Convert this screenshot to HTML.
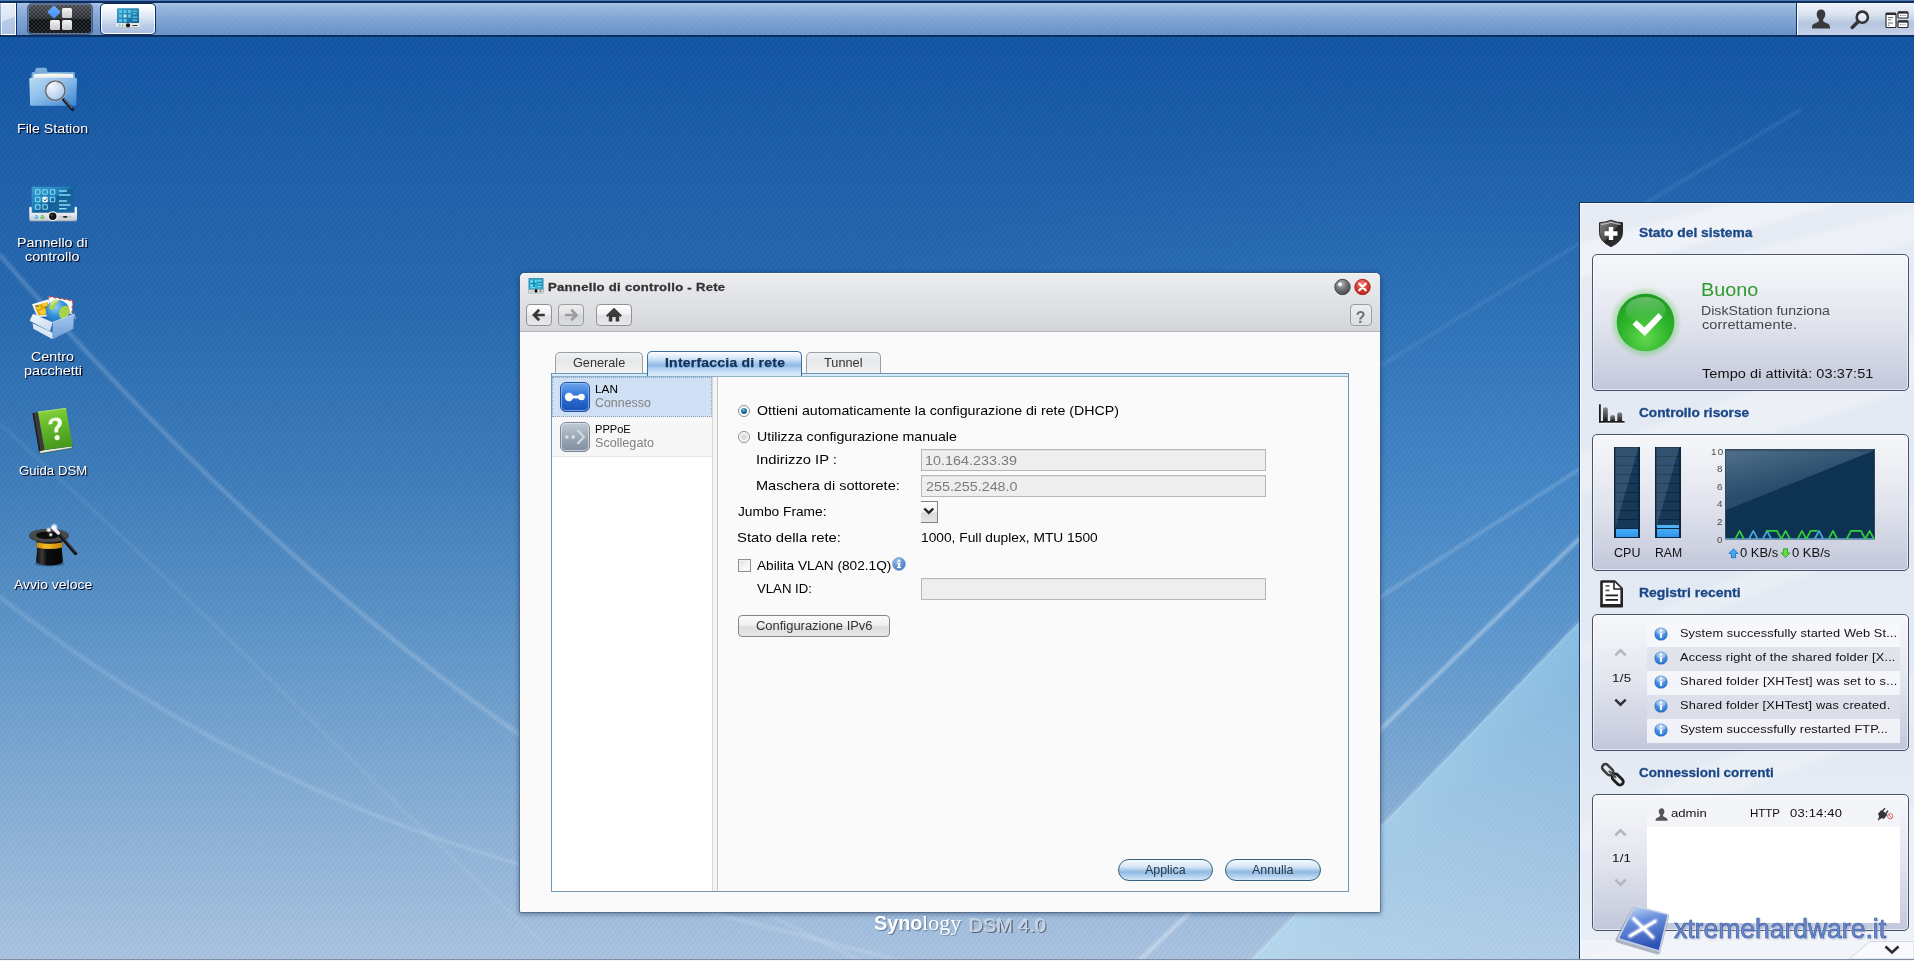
<!DOCTYPE html>
<html>
<head>
<meta charset="utf-8">
<title>Synology DSM 4.0</title>
<style>
*{box-sizing:border-box;margin:0;padding:0}
html,body{width:1914px;height:961px;overflow:hidden}
body{font-family:"Liberation Sans",sans-serif;font-size:13px;color:#000;position:relative;background:#1457a6}
.abs{position:absolute}
.t{position:absolute;white-space:nowrap;line-height:1;transform-origin:0 50%}
/* ---------- background ---------- */
#bg{position:absolute;left:0;top:0;width:1914px;height:961px;
 background:linear-gradient(180deg,#1255a5 0px,#1457a6 55px,#286bb1 315px,#3f7ebc 485px,#6399cb 655px,#86aed6 800px,#a5c1e0 935px,#aac4e2 961px)}
#bgtint{position:absolute;left:0;top:0;width:1914px;height:961px;background:radial-gradient(ellipse 800px 350px at 1520px 470px,rgba(90,175,255,.19),rgba(90,175,255,.09) 55%,rgba(90,175,255,0) 100%)}
#stripes{position:absolute;left:0;top:0;width:1914px;height:961px;
 background:repeating-linear-gradient(128deg,rgba(255,255,255,.026) 0px,rgba(255,255,255,.008) 1.2px,rgba(0,0,0,.03) 2px,rgba(0,0,0,.03) 3px,rgba(255,255,255,.026) 4px)}
#bgsvg{position:absolute;left:0;top:0}
/* ---------- taskbar ---------- */
#tb{position:absolute;left:0;top:0;width:1914px;height:37px;background:#0d2f60}
#tb .line0{position:absolute;left:0;top:0;width:1914px;height:1px;background:#4d78b3}
#tb .bar{position:absolute;left:0;top:3px;width:1914px;height:32px;
 background:linear-gradient(180deg,#a9c4e6 0,#97b6dd 4px,#7fa4d3 16px,#6a94ca 28px,#6790c6 32px)}
#tb .barstripes{position:absolute;left:0;top:3px;width:1914px;height:32px;
 background:repeating-linear-gradient(135deg,rgba(255,255,255,.035) 0,rgba(255,255,255,.035) 2px,rgba(0,0,0,.0) 2px,rgba(0,0,0,.0) 4px)}

#tb .lbox{position:absolute;left:1px;top:3px;width:15px;height:32px;border:1px solid #fff;border-left-color:#e8eef7;
 background:linear-gradient(160deg,#e9eff8 0,#dbe5f3 48%,#b9cde8 52%,#a9c1e2 100%);box-shadow:1px 0 0 #0d2f60}
#tb .mm{position:absolute;left:28px;top:4px;width:64px;height:30px;border-radius:4px;border:1px solid #5f7896;
 background-color:#1b1f25;
 background-image:linear-gradient(180deg,rgba(255,255,255,.22) 0,rgba(255,255,255,.10) 45%,rgba(0,0,0,.25) 55%,rgba(0,0,0,.1) 100%),
 repeating-conic-gradient(#30353c 0 25%,#14171b 0 50%);background-size:100% 100%,4px 4px;box-shadow:0 0 0 1px rgba(20,40,80,.55)}
#tb .mm i{position:absolute;width:10px;height:10px;border-radius:1.5px;background:linear-gradient(180deg,#f4f4f4,#c9c9c9)}
#tb .task{position:absolute;left:101px;top:4px;width:54px;height:30px;border-radius:4px;border:1px solid #fff;
 background:linear-gradient(180deg,#fdfeff 0,#e4ebf6 35%,#b9cce8 75%,#a9c0e2 100%);box-shadow:0 0 0 1px #0f2c58}
#tb .tray{position:absolute;left:1797px;top:3px;width:117px;height:32px;border-left:1px solid #fff;border-top:1px solid #f3f6fb;
 background:linear-gradient(180deg,#eef2f9 0,#dde5f1 30%,#b6c6e0 62%,#c3d1e8 100%);box-shadow:-1px 0 0 #10305f}

#bgsvg{position:absolute;left:0;top:0}

/* ---------- desktop icons ---------- */
.dl{color:#fff;text-shadow:1px 1px 0 rgba(0,0,20,.8),1px 1px 1px rgba(0,0,20,.5)}

/* ---------- window ---------- */
#win{position:absolute;left:520px;top:273px;width:860px;height:639px;background:#fafafa;border-radius:5px 5px 1px 1px;
 box-shadow:0 0 0 1px rgba(70,90,120,.55),0 1px 5px 1px rgba(10,30,70,.45)}
#win .hd{position:absolute;left:0;top:0;width:860px;height:59px;border-radius:5px 5px 0 0;
 background:linear-gradient(180deg,#eceef0 0,#e4e6e9 30%,#dadcdf 75%,#d4d6d9 100%);border-bottom:1px solid #b3b5b8;box-shadow:inset 0 1px 0 #f6f7f8}
.nbtn{position:absolute;top:31px;height:22px;border:1px solid #8f9296;border-radius:4px;
 background:linear-gradient(180deg,#fefefe 0,#f1f1f2 45%,#dfe0e1 55%,#e9e9ea 100%)}
.nbtn.dis{background:linear-gradient(180deg,#ededee 0,#e2e3e4 45%,#d4d5d7 55%,#dcdddf 100%);border-color:#9a9da1}
.tab{position:absolute;top:79px;height:22px;border:1px solid #9aa0a6;border-bottom:none;border-radius:5px 5px 0 0;
 background:linear-gradient(180deg,#f0f1f2 0,#e6e7e9 40%,#f3f4f5 100%)}
.tab.act{top:78px;height:25px;border-color:#3f6f9f;background:linear-gradient(180deg,#fdfeff 0,#d8e8f8 25%,#8fbce8 55%,#cfe4f7 85%,#d6eaf9 100%);z-index:2}
#pnl{position:absolute;left:31px;top:100px;width:798px;height:519px;border:1px solid #6e98b3;background:#fafafa}
#pnl .strip{position:absolute;left:0;top:0;width:796px;height:3px;background:#d3eafb;border-bottom:1px solid #8fb1c9}
#pnl .list{position:absolute;left:0;top:3px;width:160px;height:514px;background:#fff}
#pnl .split{position:absolute;left:160px;top:3px;width:6px;height:514px;background:#f4f4f4;border-left:1px solid #d8d8d8;border-right:1px solid #c9c9c9}
.row1{position:absolute;left:0;top:0;width:160px;height:40px;background:#cfe0f4;border:1px dotted #8da2bb}
.row2{position:absolute;left:0;top:40px;width:160px;height:40px;background:#f7f7f7;border-bottom:1px solid #e6e6e6}
.inp{position:absolute;left:401px;width:345px;height:22px;border:1px solid #b5b8bb;background:#eeeeee;box-shadow:inset 0 1px 0 #e2e2e2}
.pill{position:absolute;top:586px;height:22px;border:1px solid #35627f;border-radius:11px;
 background:linear-gradient(180deg,#f6fafe 0,#d6e6f6 35%,#8fb9e3 60%,#b9d5f0 85%,#d5e7f7 100%)}
.gbtn{position:absolute;border:1px solid #83878c;border-radius:4px;background:linear-gradient(180deg,#fcfcfc 0,#efeff0 45%,#dcddde 55%,#e6e7e8 100%)}
.radio{position:absolute;width:12px;height:12px;border-radius:50%;border:1px solid #8a8b8c;background:radial-gradient(circle at 50% 50%,#d4d4d4 0,#e6e6e6 45%,#fff 62%,#fff 100%)}
.chk{position:absolute;width:13px;height:13px;border:1px solid #8e8f8f;background:linear-gradient(135deg,#dcdcdc 0,#f6f6f6 60%,#fff 100%);box-shadow:inset 0 0 0 1px #f4f4f4}

/* ---------- widget panel ---------- */
#wp{position:absolute;left:1579px;top:202px;width:335px;height:757px;border-left:1px solid #13335f;border-top:1px solid #13335f;
 background:linear-gradient(180deg,#e6ebf4 0,#e3e9f3 40%,#e4eaf3 70%,#e9edf5 100%);box-shadow:inset 1px 1px 0 #f7f9fc;overflow:hidden}
#wp .ray{position:absolute;background:linear-gradient(90deg,rgba(255,255,255,0),rgba(255,255,255,.55),rgba(255,255,255,0));transform-origin:0 0}
.wbox{position:absolute;left:1592px;width:317px;height:137px;border:1px solid #46536a;border-radius:5px;
 background:linear-gradient(180deg,#f6f7fa 0,#f0f1f6 18%,#e2e4ee 50%,#cfd3e2 80%,#c2c7da 100%);box-shadow:inset 0 0 0 1px rgba(255,255,255,.55)}
.wt{color:#1a4786;-webkit-text-stroke:.3px #1a4786}
.lrow{position:absolute;left:1647px;width:253px;height:24px}
.seg{position:absolute;border:1px solid #0b2238;background:#14395a}
</style>
</head>
<body>
<div id="root" style="position:absolute;left:0;top:0;width:1914px;height:961px;will-change:transform">
<div id="bg"></div>
<div id="bgtint"></div>
<div id="stripes"></div>
<svg id="bgsvg" width="1914" height="961" viewBox="0 0 1914 961">
<defs>
<filter id="bl2" x="-5%" y="-5%" width="110%" height="110%"><feGaussianBlur stdDeviation="1.600"/></filter>
<filter id="bl4" x="-5%" y="-5%" width="110%" height="110%"><feGaussianBlur stdDeviation="3"/></filter>
<linearGradient id="wdg" gradientUnits="userSpaceOnUse" x1="1415" y1="791" x2="1635" y2="1004"><stop offset="0" stop-color="#c6f2ff" stop-opacity=".44"/><stop offset=".12" stop-color="#c6f0ff" stop-opacity=".36"/><stop offset=".5" stop-color="#c8eeff" stop-opacity=".28"/><stop offset="1" stop-color="#d0ecff" stop-opacity=".22"/></linearGradient>
</defs>
<path d="M1250 961 1914 277V961z" fill="url(#wdg)"/>
<g fill="none" stroke="#fff" stroke-linecap="round">
<g filter="url(#bl2)">
<path d="M1139 961 1700 423" stroke-width="3.500" opacity=".40"/>
<path d="M1250 961 1700 497" stroke-width="2" opacity=".25"/>
<path d="M900 905Q1200 712 1700 392" stroke-width="3" opacity=".22"/>
<path d="M700 800Q1250 440 1800 110" stroke-width="3" opacity=".10"/>
<path d="M0 255Q250 545 520 735T760 905" stroke-width="4" opacity=".2"/>
<path d="M0 597Q260 800 560 875T900 961" stroke-width="3.500" opacity=".16"/>
<path d="M0 424Q150 560 291 700T540 940" stroke-width="3" opacity=".09"/>
<path d="M740 900 860 961" stroke-width="3" opacity=".14"/>
</g>
</g>
</svg>
<div id="tb">
 <div class="line0"></div>
 <div class="bar"></div>
 <div class="barstripes"></div>
 <div class="lbox"></div>
 <div class="mm">
  <i style="left:20px;top:2px;transform:rotate(45deg) scale(.95);background:linear-gradient(135deg,#6db0ff,#3f8cf0);border-radius:1px"></i>
  <i style="left:33px;top:2.5px"></i>
  <i style="left:20.5px;top:14.5px"></i>
  <i style="left:33px;top:14.5px"></i>
 </div>
 <div class="task">
  <svg class="abs" style="left:14px;top:3px" width="24" height="22" viewBox="0 0 24 22">
   <rect x="1" y="0.5" width="22" height="16" rx="1" fill="#1f7fb4"/>
   <rect x="1" y="0.5" width="22" height="16" rx="1" fill="url(#cpg)"/>
   <g fill="#5cc3e4"><rect x="3" y="2" width="3" height="3"/><rect x="7.5" y="2" width="3" height="3"/><rect x="12" y="2" width="3" height="3"/>
   <rect x="3" y="6.5" width="3" height="3"/><rect x="7.5" y="6.5" width="3" height="3" fill="#bfeaf6"/><rect x="12" y="6.5" width="3" height="3"/>
   <rect x="3" y="11" width="3" height="3"/><rect x="7.5" y="11" width="3" height="3"/>
   <rect x="16.5" y="2.5" width="5" height="1.3"/><rect x="16.5" y="5" width="4" height="1.3"/><rect x="16.5" y="8.5" width="5" height="1.3"/><rect x="16.5" y="11.5" width="4.5" height="1.3"/></g>
   <rect x="0" y="15" width="24" height="5" rx="1" fill="#e3e6ea"/>
   <rect x="0" y="19" width="24" height="1" fill="#b9bec6"/>
   <circle cx="12" cy="17.3" r="2.1" fill="#111"/>
   <circle cx="3.5" cy="17.5" r="1" fill="#59c4e8"/><circle cx="6.5" cy="17.5" r="1" fill="#6cd04a"/>
   <rect x="16.5" y="17" width="5" height="1" fill="#333"/>
  </svg>
 </div>
 <div class="tray">
  <svg class="abs" style="left:13px;top:5px" width="20" height="20" viewBox="0 0 20 20"><path d="M10 0.5c2.6 0 4.3 2 4.3 4.8 0 2-0.9 3.9-2.1 4.9v1.6c0 .9 1.2 1.5 3.6 2.5 2.4 1 3.2 2 3.2 3.9v1.3H1v-1.3c0-1.9 .8-2.9 3.2-3.9 2.4-1 3.6-1.6 3.6-2.5v-1.6C6.600 9.200 5.700 7.300 5.700 5.300 5.700 2.500 7.400 .5 10 .5z" fill="#3a3a3c"/></svg>
  <svg class="abs" style="left:52px;top:6px" width="20" height="20" viewBox="0 0 20 20"><circle cx="12.300" cy="7.200" r="5.600" fill="rgba(255,255,255,.45)" stroke="#333335" stroke-width="2.600"/><path d="M8 11.800 2.300 17.500" stroke="#333335" stroke-width="3.400" stroke-linecap="round"/></svg>
  <svg class="abs" style="left:87px;top:7px" width="24" height="18" viewBox="0 0 24 18">
   <rect x="1" y="2" width="10" height="14.500" rx="1" fill="#fff" stroke="#2b2b2d" stroke-width="1.200"/><rect x="1" y="2" width="10" height="2" fill="#2b2b2d"/>
   <g fill="#666"><rect x="3" y="6" width="5" height="1"/><rect x="3" y="8.300" width="3.500" height="1"/><rect x="3" y="11.500" width="5" height="1"/><rect x="3" y="13.700" width="1.500" height="1"/></g>
   <rect x="13" y="0.800" width="10" height="6.200" rx="1" fill="#fff" stroke="#2b2b2d" stroke-width="1.200"/><rect x="13" y="0.800" width="10" height="1.800" fill="#2b2b2d"/>
   <rect x="13" y="9.800" width="10" height="6.700" rx="1" fill="#fff" stroke="#2b2b2d" stroke-width="1.200"/><rect x="13" y="9.800" width="10" height="1.800" fill="#2b2b2d"/>
   <g fill="#777"><rect x="15" y="4" width="1.200" height="1"/><rect x="17.300" y="4" width="1.200" height="1"/><rect x="19.600" y="4" width="1.200" height="1"/><rect x="15" y="13.200" width="1.200" height="1"/><rect x="17.300" y="13.200" width="1.200" height="1"/><rect x="19.600" y="13.200" width="1.200" height="1"/></g>
  </svg>
 </div>
</div>
<svg width="0" height="0" style="position:absolute"><defs><linearGradient id="cpg" x1="0" y1="0" x2="1" y2="1"><stop offset="0" stop-color="#3aa6d6" stop-opacity=".9"/><stop offset="1" stop-color="#14608f" stop-opacity=".9"/></linearGradient></defs></svg>


<div id="desk"><svg class="abs" style="left:20px;top:56px" width="64" height="64" viewBox="0 0 64 64">
<defs>
<linearGradient id="fs1" x1="0" y1="0" x2="1" y2="1"><stop offset="0" stop-color="#bcdcf5"/><stop offset=".45" stop-color="#8cbdeb"/><stop offset="1" stop-color="#3a84d0"/></linearGradient>
<linearGradient id="fs2" x1="0" y1="0" x2="0" y2="1"><stop offset="0" stop-color="#7fb0e0"/><stop offset="1" stop-color="#4f8fd2"/></linearGradient>
<radialGradient id="fs3" cx=".35" cy=".3" r=".9"><stop offset="0" stop-color="#f4f8fc" stop-opacity=".95"/><stop offset=".55" stop-color="#c9dcf0" stop-opacity=".9"/><stop offset="1" stop-color="#8fb4de" stop-opacity=".9"/></radialGradient>
</defs>
<path d="M11.500 49V17.500q0-1.500 1.500-1.500h1.700l.8-3q.4-1.200 1.600-1.200h8.200q1.200 0 1.500 1.200l.7 3h26q1.500 0 1.500 1.500V49z" fill="url(#fs2)"/>
<path d="M13.500 18.500q12-1.800 39.500-.6l.5 5h-40z" fill="#fdfbe9"/>
<path d="M14 19.800q12-1.500 39-.4l.3 3h-39z" fill="#e9eef2" opacity=".8"/>
<path d="M9.300 23.200q0-1.500 1.500-1.500h44.700q1.500 0 1.500 1.500l-.8 25.300q-.1 1.500-1.600 1.500H11.700q-1.500 0-1.600-1.500z" fill="url(#fs1)"/>
<path d="M10 49.800h46" stroke="#2a6cb8" stroke-width=".8" opacity=".6"/>
<path d="M43.500 43.500 52.500 53.500" stroke="#16182a" stroke-width="3.200" stroke-linecap="round"/>
<path d="M44 43 52 52" stroke="#9aa3b8" stroke-width=".9" stroke-linecap="round"/>
<circle cx="35.300" cy="34.700" r="9.900" fill="url(#fs3)" stroke="#5a6272" stroke-width="1.700"/>
<circle cx="35.300" cy="34.700" r="10.700" fill="none" stroke="#e8ecf2" stroke-width=".6" opacity=".8"/>
<path d="M28.500 31q3-6 9-5.500-5 1.500-7.500 7z" fill="#fff" opacity=".7"/>
</svg>
<div class="t dl" style="left:17.36px;top:122px;font-size:13px;transform:scaleX(1.0921);">File Station</div>
<svg class="abs" style="left:20px;top:172px" width="64" height="64" viewBox="0 0 64 64">
<defs>
<linearGradient id="cp1" x1="0" y1="0" x2="1" y2="1"><stop offset="0" stop-color="#3aa2d6"/><stop offset=".45" stop-color="#1f7ab6"/><stop offset=".5" stop-color="#155f98"/><stop offset="1" stop-color="#1a6aa6"/></linearGradient>
<linearGradient id="cp2" x1="0" y1="0" x2="0" y2="1"><stop offset="0" stop-color="#fbfbfc"/><stop offset=".6" stop-color="#e3e5e9"/><stop offset="1" stop-color="#c3c7ce"/></linearGradient>
</defs>
<rect x="11.700" y="14.700" width="42.600" height="27" fill="url(#cp1)"/>
<g fill="none" stroke="#7fdcf2" stroke-width="1.100">
<rect x="15.500" y="17.800" width="4.500" height="4.500" rx=".8"/><rect x="22.800" y="17.800" width="4.500" height="4.500" rx=".8"/><rect x="30.300" y="17.800" width="4.500" height="4.500" rx=".8"/>
<rect x="15.500" y="25.300" width="4.500" height="4.500" rx=".8"/><rect x="30.300" y="25.300" width="4.500" height="4.500" rx=".8"/>
<rect x="15.500" y="32.800" width="4.500" height="4.500" rx=".8"/><rect x="22.800" y="32.800" width="4.500" height="4.500" rx=".8"/></g>
<rect x="22.300" y="24.800" width="5.500" height="5.500" rx="1" fill="#f2fbfd"/><path d="M23.500 27.500l1.500 1.500 2.200-2.800" fill="none" stroke="#1b6a8e" stroke-width="1"/>
<g fill="#8fe0f4"><rect x="39" y="18.300" width="8" height="1.400"/><rect x="39" y="22.300" width="11.500" height="1.400"/><rect x="39" y="28.300" width="8" height="1.400"/><rect x="39" y="32.300" width="11.500" height="1.400"/><rect x="39" y="36" width="7.500" height="1.400"/></g>
<path d="M9.300 36q0-1.300 1.200-1.300t1.200 1.300v4.700h42.900V36q0-1.300 1.200-1.300t1.200 1.300v11q0 2-2 2H11.300q-2 0-2-2z" fill="url(#cp2)"/>
<path d="M9.800 49h46.700" stroke="#9aa0aa" stroke-width=".7"/>
<circle cx="32.700" cy="44.300" r="5" fill="#eceef1"/><circle cx="32.700" cy="44.300" r="3.700" fill="#141414"/><circle cx="31.800" cy="43.300" r="1.500" fill="#3a3a3a"/>
<circle cx="16.300" cy="45" r="2" fill="#4fb8e6"/><circle cx="22.300" cy="45" r="2" fill="#5cc845"/><circle cx="15.800" cy="44.500" r=".8" fill="#bfe8f8"/><circle cx="21.800" cy="44.500" r=".8" fill="#c9f0b8"/>
<rect x="40" y="44.200" width="11.700" height="1.300" fill="#b9bdc4"/><rect x="43.300" y="44" width="3.800" height="1.700" fill="#222"/>
</svg>
<div class="t dl" style="left:17.46px;top:236px;font-size:13px;transform:scaleX(1.0971);">Pannello di</div>
<div class="t dl" style="left:25.42px;top:250px;font-size:13px;transform:scaleX(1.1081);">controllo</div>
<svg class="abs" style="left:20px;top:286px" width="64" height="64" viewBox="0 0 64 64">
<defs>
<linearGradient id="pk1" x1="0" y1="0" x2="0" y2="1"><stop offset="0" stop-color="#a5c7ee"/><stop offset="1" stop-color="#6f9ed8"/></linearGradient>
<linearGradient id="pk2" x1="0" y1="0" x2="1" y2="1"><stop offset="0" stop-color="#f2f7fd"/><stop offset="1" stop-color="#c9dbf0"/></linearGradient>
<radialGradient id="pk3" cx=".4" cy=".3" r=".8"><stop offset="0" stop-color="#8fd0f4"/><stop offset=".5" stop-color="#2f8fd8"/><stop offset="1" stop-color="#1a62b0"/></radialGradient>
</defs>
<path d="M28.700 10.500 52.700 14.700 52 28 30 24z" fill="#fbfbfb"/>
<path d="M28.700 10.500 52.700 14.700" stroke="#d8433a" stroke-width="1.600" stroke-dasharray="2.500 2.500"/>
<path d="M52.700 14.700 52 27" stroke="#d8433a" stroke-width="1.400" stroke-dasharray="2.500 2.500"/>
<path d="M12 18.200 28.700 13.300 31.500 30 17.300 31z" fill="#f6f6f6"/>
<path d="M14.500 19.800 27.700 16 29.600 28.500 18.500 29.500z" fill="#e2a616"/>
<path d="M15 20.500l4-1.200 2 3-3 1zM22 18l5-1.500.5 3-4 1zM19 25l5-2 3 4-6 1.500z" fill="#f6cf3a"/>
<path d="M14.800 20l3-1 1.500 2.200zM24 21l3.500-.5.500 3z" fill="#3f5a18" opacity=".8"/>
<circle cx="37.700" cy="25.700" r="11.800" fill="url(#pk3)"/>
<path d="M29 20q2-5 7-6.500 3 .5 2.500 3-3 1-3.500 4-1 3-3.500 3.500-2.500-1-2.500-4zM40.500 22q3-3 7.500-2 1.800 3 1.500 7-2 5-6.500 6.500-3.500-1.500-4-5 0-4 1.500-6.500z" fill="#a9d24a"/>
<path d="M30 17.500q4-4.500 10-3.500-5 1-8 6z" fill="#fff" opacity=".45"/>
<path d="M12.700 37.300 32.700 46.700V53.300L13.300 42.700z" fill="#dbe7f6"/>
<path d="M32.700 36.300 54 28 53.300 42.700 32.700 53.300z" fill="url(#pk1)"/>
<path d="M9.700 34.700 13 27.700 32.700 36.300 30 45.300z" fill="url(#pk2)"/>
<path d="M32.700 36.300 54 28 55.500 33" fill="none" stroke="#c3d8f2" stroke-width=".8"/>
</svg>
<div class="t dl" style="left:31.29px;top:350px;font-size:13px;transform:scaleX(1.0985);">Centro</div>
<div class="t dl" style="left:23.73px;top:364px;font-size:13px;transform:scaleX(1.1162);">pacchetti</div>
<svg class="abs" style="left:20px;top:400px" width="64" height="64" viewBox="0 0 64 64">
<defs><linearGradient id="hb1" x1="0" y1="0" x2=".2" y2="1"><stop offset="0" stop-color="#8fd63f"/><stop offset=".5" stop-color="#62b82a"/><stop offset="1" stop-color="#479a1c"/></linearGradient></defs>
<path d="M19 51.300 24.700 49.700 52.700 46 51.700 48.200 20.200 53.500z" fill="#e8efe3" stroke="#1f3a1a" stroke-width=".6"/>
<path d="M12.500 13.300 18 12 24.700 49.700 19 51.300z" fill="#3b3b3b"/>
<path d="M12.500 13.300 14 13 20.500 51 19 51.300z" fill="#1f1f1f"/>
<path d="M18 12 46 8.300 52.700 46 24.700 49.700z" fill="url(#hb1)"/>
<path d="M18 12 46 8.300" stroke="#b8ec78" stroke-width=".8"/>
<g transform="rotate(-8 36 29)"><path d="M29.200 23.500q.3-5.700 6.800-5.900 6.600 0 6.800 5.300.1 3.200-3.300 5.300-1.800 1.200-1.800 4.300h-3.700q-.2-4.300 2.400-6.200 2.400-1.700 2.300-3.400-.2-2.200-2.700-2.200-2.800 0-3 2.800z" fill="#f4fbe9"/><circle cx="35.900" cy="37.800" r="2.600" fill="#f4fbe9"/></g>
</svg>
<div class="t dl" style="left:18.54px;top:464px;font-size:13px;transform:scaleX(1.015);">Guida DSM</div>
<svg class="abs" style="left:20px;top:512px" width="64" height="64" viewBox="0 0 64 64">
<defs>
<linearGradient id="mh1" x1="0" y1="0" x2="1" y2="0"><stop offset="0" stop-color="#0a0a0a"/><stop offset=".22" stop-color="#3b3b3e"/><stop offset=".4" stop-color="#0c0c0c"/><stop offset="1" stop-color="#050505"/></linearGradient>
<linearGradient id="mh2" x1="0" y1="0" x2="1" y2="0"><stop offset="0" stop-color="#c98a0c"/><stop offset=".35" stop-color="#f2bd2c"/><stop offset="1" stop-color="#c48408"/></linearGradient>
<radialGradient id="mh3"><stop offset="0" stop-color="#fff"/><stop offset=".4" stop-color="#fff" stop-opacity=".8"/><stop offset="1" stop-color="#fff" stop-opacity="0"/></radialGradient>
</defs>
<ellipse cx="29.500" cy="52" rx="15" ry="2.500" fill="#0b2a55" opacity=".35"/>
<path d="M16.500 29q1 8 .2 14-.8 5-.5 7.500 4 3 13.300 3t13.300-3q.3-2.500-.5-7.500-.8-6 .2-14z" fill="url(#mh1)"/>
<path d="M16.600 30.300q12.500 3 25.800 0v5.200q-13 3-25.600 0z" fill="url(#mh2)"/>
<ellipse cx="29" cy="23.700" rx="20" ry="7" fill="#3a3a3c"/>
<ellipse cx="29" cy="23.200" rx="19.300" ry="6.300" fill="#4a4a4c"/>
<ellipse cx="27.500" cy="23.300" rx="11.500" ry="3.800" fill="#0d0d0d"/>
<path d="M38 21 55.500 41.500" stroke="#0e0e10" stroke-width="3.300" stroke-linecap="round"/>
<path d="M38.500 20.500 55 40" stroke="#55555c" stroke-width=".9" stroke-linecap="round"/>
<path d="M33 15.500 38.300 21" stroke="#f1e4f6" stroke-width="3.400" stroke-linecap="round"/>
<circle cx="28.700" cy="18" r="3" fill="url(#mh3)"/><circle cx="30.700" cy="22.700" r="2.400" fill="url(#mh3)"/><circle cx="34.300" cy="15" r="4" fill="url(#mh3)"/>
</svg>
<div class="t dl" style="left:14.00px;top:578px;font-size:13px;transform:scaleX(1.0742);">Avvio veloce</div></div>
<div id="win">
<div class="hd"></div>
<svg class="abs" style="left:8px;top:4.500px" width="16" height="16" viewBox="0 0 16 16">
<rect x="1" y="0.700" width="14" height="10.800" fill="#2fb3d8" stroke="#2a7ba3" stroke-width=".9"/>
<g fill="#1a7fae"><rect x="5.300" y="2.300" width="1.200" height="6.500"/><rect x="2.500" y="5" width="6" height="1"/><rect x="9" y="4" width="4.500" height="1"/><rect x="9" y="6.500" width="4.500" height="1.100"/></g>
<g fill="#7fe0f2"><rect x="2.500" y="2.300" width="2.300" height="2.200"/><rect x="7" y="2.300" width="1.500" height="2.200"/><rect x="9.500" y="2.300" width="3.800" height="1"/><rect x="9.500" y="5.200" width="3" height="1"/><rect x="9.500" y="7.800" width="3.500" height="1"/><rect x="2.500" y="6.500" width="2.300" height="2"/><rect x="2.500" y="9.300" width="5" height=".8"/></g>
<rect x="0.500" y="11.400" width="15" height="3.600" rx=".8" fill="#e4e8e6" stroke="#8a9a9c" stroke-width=".6"/>
<circle cx="8" cy="13.100" r="1.500" fill="#0a0a0a"/><rect x="7.500" y="10.800" width="1" height="1.500" fill="#0a0a0a"/>
<rect x="2" y="12.600" width="1.200" height="1" fill="#9aa"/><rect x="4" y="12.600" width="1.200" height="1" fill="#9aa"/><rect x="11.500" y="12.600" width="2" height="1" fill="#334"/></svg>
<div class="t" style="left:28.21px;top:9px;font-size:11.3px;font-weight:bold;color:#333;letter-spacing:0.24px;transform:scaleX(1.16);-webkit-text-stroke:.3px #333;">Pannello di controllo - Rete</div>
<svg class="abs" style="left:813px;top:5px" width="40" height="18" viewBox="0 0 40 18">
<defs><radialGradient id="gm" cx=".4" cy=".3" r=".8"><stop offset="0" stop-color="#b9bcbf"/><stop offset=".5" stop-color="#6d7174"/><stop offset="1" stop-color="#3f4245"/></radialGradient>
<radialGradient id="gc" cx=".45" cy=".3" r=".8"><stop offset="0" stop-color="#f28a80"/><stop offset=".5" stop-color="#d83a32"/><stop offset="1" stop-color="#a81f1c"/></radialGradient></defs>
<circle cx="9.500" cy="9" r="7.700" fill="url(#gm)" stroke="#44484b" stroke-width="1"/><circle cx="7" cy="6.300" r="1.900" fill="#fff"/>
<circle cx="29.500" cy="9" r="7.700" fill="url(#gc)" stroke="#b5251f" stroke-width="1"/><path d="M26.300 5.800l6.400 6.400M32.700 5.800l-6.400 6.400" stroke="#fff" stroke-width="2.300" stroke-linecap="round"/>
</svg>
<div class="nbtn" style="left:6px;width:26px"><svg width="24" height="20" viewBox="0 0 24 20"><path d="M12.200 4.800 7 10l5.200 5.200M7.500 10H17.800" fill="none" stroke="#37383a" stroke-width="2.700" stroke-linecap="butt" stroke-linejoin="miter"/></svg></div>
<div class="nbtn dis" style="left:38px;width:26px"><svg width="24" height="20" viewBox="0 0 24 20"><path d="M12.300 4.800 17.500 10l-5.200 5.200M17 10H6" fill="none" stroke="#9a9c9f" stroke-width="2.700"/></svg></div>
<div class="nbtn" style="left:76px;width:36px"><svg width="34" height="20" viewBox="0 0 34 20"><path d="M9.800 11.300 17 4.300l7.200 7" fill="none" stroke="#37383a" stroke-width="2.300"/><path d="M11.800 10.500 17 5.600l5.200 4.900v6.100h-3.500v-4.600h-3.400v4.600h-3.500z" fill="#37383a"/></svg></div>
<div class="nbtn dis" style="left:830px;width:22px;background:linear-gradient(180deg,#ecedee,#dcdee0)"></div>
<div class="t" style="left:835.70px;top:37px;font-size:16px;font-weight:bold;color:#6f7276;">?</div>
<div class="tab" style="left:35px;width:88px"></div>
<div class="tab act" style="left:127px;width:155px"></div>
<div class="tab" style="left:286px;width:75px"></div>
<div class="t" style="left:52.87px;top:84px;font-size:12px;color:#333;transform:scaleX(1.0572);z-index:3;">Generale</div>
<div class="t" style="left:144.66px;top:84px;font-size:12px;font-weight:bold;color:#15305a;letter-spacing:0.22px;transform:scaleX(1.16);z-index:3;-webkit-text-stroke:.25px #15305a;">Interfaccia di rete</div>
<div class="t" style="left:303.74px;top:84px;font-size:12px;color:#333;transform:scaleX(1.0629);z-index:3;">Tunnel</div>
<div id="pnl"><div class="strip"></div><div class="list"><div class="row1"></div><div class="row2"></div></div><div class="split"></div></div>
<svg class="abs" style="left:40px;top:109px" width="30" height="30" viewBox="0 0 30 30">
<defs><linearGradient id="lg1" x1="0" y1="0" x2="0" y2="1"><stop offset="0" stop-color="#6fa8ee"/><stop offset=".5" stop-color="#2d6fd6"/><stop offset="1" stop-color="#1b4fb4"/></linearGradient></defs>
<rect x=".5" y=".5" width="29" height="29" rx="5.500" fill="url(#lg1)" stroke="#1f4f9f"/><rect x="1.500" y="1.500" width="27" height="27" rx="4.500" fill="none" stroke="#9cc4f6" stroke-opacity=".7"/>
<circle cx="9" cy="15" r="4.200" fill="#fff"/><circle cx="21.500" cy="15" r="3.300" fill="#fff"/><rect x="9" y="13.600" width="12" height="2.800" fill="#fff"/></svg>
<svg class="abs" style="left:40px;top:149px" width="30" height="30" viewBox="0 0 30 30">
<defs><linearGradient id="lg2" x1="0" y1="0" x2="0" y2="1"><stop offset="0" stop-color="#c3ccd6"/><stop offset=".5" stop-color="#9aa7b5"/><stop offset="1" stop-color="#7f8e9e"/></linearGradient></defs>
<rect x=".5" y=".5" width="29" height="29" rx="5.500" fill="url(#lg2)" stroke="#7b8896"/><rect x="1.500" y="1.500" width="27" height="27" rx="4.500" fill="none" stroke="#e3e8ee" stroke-opacity=".7"/>
<circle cx="6.800" cy="15" r="2" fill="#d3d9e0"/><circle cx="13.200" cy="15" r="2" fill="#d3d9e0"/><path d="M18 8.800l6 6.200-6 6.200" fill="none" stroke="#d3d9e0" stroke-width="2.200" stroke-linecap="round" stroke-linejoin="round"/></svg>
<div class="t" style="left:74.66px;top:111px;font-size:11px;transform:scaleX(1.0725);">LAN</div>
<div class="t" style="left:74.98px;top:124px;font-size:12px;color:#808080;transform:scaleX(1.0332);">Connesso</div>
<div class="t" style="left:74.72px;top:151px;font-size:11px;transform:scaleX(1.0056);">PPPoE</div>
<div class="t" style="left:74.97px;top:164px;font-size:12px;color:#808080;transform:scaleX(1.0517);">Scollegato</div>
<div class="radio" style="left:218px;top:132px;background:#fff"></div><div class="abs" style="left:220.600px;top:134.600px;width:6.800px;height:6.800px;border-radius:50%;background:radial-gradient(circle at 45% 30%,#7fc4e6 0,#2a7fb0 35%,#0b4f7f 75%)"></div>
<div class="radio" style="left:218px;top:158px"></div>
<div class="t" style="left:236.89px;top:131px;font-size:13px;transform:scaleX(1.0915);">Ottieni automaticamente la configurazione di rete (DHCP)</div>
<div class="t" style="left:236.61px;top:157px;font-size:13px;transform:scaleX(1.089);">Utilizza configurazione manuale</div>
<div class="t" style="left:236.27px;top:180px;font-size:13px;transform:scaleX(1.1357);">Indirizzo IP :</div>
<div class="inp" style="top:176px"></div>
<div class="t" style="left:405.49px;top:181px;font-size:13px;color:#7b7b7b;transform:scaleX(1.1061);">10.164.233.39</div>
<div class="t" style="left:236.44px;top:206px;font-size:13px;transform:scaleX(1.1179);">Maschera di sottorete:</div>
<div class="inp" style="top:202px"></div>
<div class="t" style="left:405.78px;top:207px;font-size:13px;color:#7b7b7b;transform:scaleX(1.1008);">255.255.248.0</div>
<div class="t" style="left:217.73px;top:232px;font-size:13px;transform:scaleX(1.0556);">Jumbo Frame:</div>
<div class="abs" style="left:401px;top:228px;width:17px;height:22px;border:1px solid #7d8186;border-left:none;background:linear-gradient(180deg,#fdfdfd 0,#f0f0f1 50%,#d9dadc 55%,#e3e4e5 100%)"><svg width="16" height="20" viewBox="0 0 16 20"><path d="M3.300 6.500l4.500 4.300 4.500-4.300" fill="none" stroke="#222" stroke-width="2.400"/></svg></div>
<div class="t" style="left:217.26px;top:258px;font-size:13px;transform:scaleX(1.1421);">Stato della rete:</div>
<div class="t" style="left:401.34px;top:258px;font-size:13px;transform:scaleX(1.0587);">1000, Full duplex, MTU 1500</div>
<div class="chk" style="left:218px;top:286px"></div>
<div class="t" style="left:237.00px;top:286px;font-size:13px;transform:scaleX(1.0503);">Abilita VLAN (802.1Q)</div>
<svg class="abs" style="left:372px;top:284px" width="14" height="14" viewBox="0 0 14 14"><defs><radialGradient id="gi" cx=".4" cy=".3" r=".8"><stop offset="0" stop-color="#a4c4e8"/><stop offset=".6" stop-color="#5a8ecb"/><stop offset="1" stop-color="#3f74b4"/></radialGradient></defs><circle cx="7" cy="7" r="6.500" fill="url(#gi)" stroke="#88aede" stroke-width=".8"/><rect x="6" y="5.800" width="2.200" height="5" fill="#fff"/><rect x="5.200" y="5.800" width="2" height="1.100" fill="#fff"/><rect x="5" y="10" width="4.200" height="1.100" fill="#fff"/><circle cx="7" cy="3.700" r="1.300" fill="#fff"/></svg>
<div class="t" style="left:237.30px;top:309px;font-size:13px;transform:scaleX(1.0124);">VLAN ID:</div>
<div class="inp" style="top:305px"></div>
<div class="gbtn" style="left:218px;top:342px;width:152px;height:22px"></div>
<div class="t" style="left:235.85px;top:347px;font-size:12px;color:#333;transform:scaleX(1.0784);">Configurazione IPv6</div>
<div class="pill" style="left:598px;width:95px"></div><div class="pill" style="left:705px;width:96px"></div>
<div class="t" style="left:625.00px;top:591px;font-size:12px;color:#2a3a4a;transform:scaleX(1.034);">Applica</div>
<div class="t" style="left:732.00px;top:591px;font-size:12px;color:#2a3a4a;transform:scaleX(1.0354);">Annulla</div>
</div>
<div class="t" style="left:873.71px;top:913px;font-size:20.5px;font-weight:bold;color:#fff;transform:scaleX(0.9674);text-shadow:1px 1px 1px rgba(60,80,110,.65);">Syno</div>
<div class="t" style="left:921.500px;top:913.1px;font-size:21.5px;font-family:'Liberation Serif',serif;color:#fff;letter-spacing:0;transform:scaleX(1.03);text-shadow:1px 1px 1px rgba(60,80,110,.55)">logy</div>
<div class="t" style="left:968.61px;top:917px;font-size:18.5px;color:#c9d2dd;transform:scaleX(1.0725);text-shadow:1px 1px 0 #56657a,-1px -1px 0 rgba(255,255,255,.35);">DSM 4.0</div>
<div id="wp"><svg class="abs" style="left:0;top:0" width="335" height="757" viewBox="0 0 335 757">
<defs><filter id="wpb" x="-10%" y="-10%" width="120%" height="120%"><feGaussianBlur stdDeviation="2.500"/></filter></defs>
<g filter="url(#wpb)" fill="#fff">
<path d="M0 75 0 40 150 0 260 0z" opacity=".38"/>
<path d="M120 60 335 5V40L250 60z" opacity=".28"/>
<path d="M0 250 335 130V185L0 290z" opacity=".30"/>
<path d="M0 440 335 300V330L0 460z" opacity=".22"/>
<path d="M0 620 335 470V520L0 650z" opacity=".25"/>
<path d="M0 757 335 600V757z" opacity=".30"/>
</g></svg></div>
<svg class="abs" style="left:1598px;top:219px" width="26" height="29" viewBox="0 0 26 29">
<defs><linearGradient id="sh1" x1="0" y1="0" x2="1" y2="1"><stop offset="0" stop-color="#8a8a8a"/><stop offset=".5" stop-color="#4a4a4a"/><stop offset=".52" stop-color="#222"/><stop offset="1" stop-color="#3a3a3a"/></linearGradient></defs>
<path d="M13 1.200q5 2.200 11.500 2.500v10q0 8.500-11.500 14Q1.500 22.200 1.500 13.700v-10Q8 3.400 13 1.200z" fill="url(#sh1)" stroke="#2a2a2a" stroke-width="1"/>
<path d="M13 3.200q4.500 1.800 9.800 2.200" fill="none" stroke="#e8e8e8" stroke-width="1" opacity=".8"/><path d="M13 3.200q-4.500 1.800-9.800 2.200" fill="none" stroke="#e8e8e8" stroke-width="1" opacity=".8"/>
<path d="M10.800 8h4.400v4.300h4.300v4.400h-4.300V21h-4.400v-4.300H6.500v-4.400h4.300z" fill="#fff"/></svg>
<div class="t wt" style="left:1638.99px;top:227px;font-size:12.5px;font-weight:bold;transform:scaleX(1.1034);">Stato del sistema</div>
<svg class="abs" style="left:1598px;top:403px" width="28" height="22" viewBox="0 0 28 22">
<defs><linearGradient id="ci1" x1="0" y1="0" x2="0" y2="1"><stop offset="0" stop-color="#8a8a8a"/><stop offset="1" stop-color="#1e1e1e"/></linearGradient></defs>
<rect x="1" y="1.300" width="1.800" height="18.500" fill="#1c1c1c"/><rect x="1" y="18" width="25.500" height="1.800" fill="#1c1c1c"/>
<rect x="1" y="19.800" width="25.500" height=".8" fill="#fff" opacity=".8"/>
<path d="M5 18V6.200q0-2 2.400-2t2.400 2V18z" fill="url(#ci1)"/><path d="M12.200 18v-4q0-2 2.400-2t2.400 2v4z" fill="url(#ci1)"/><path d="M19.300 18v-6.800q0-2 2.400-2t2.400 2V18z" fill="url(#ci1)"/></svg>
<div class="t wt" style="left:1639.35px;top:407px;font-size:12.5px;font-weight:bold;transform:scaleX(1.0937);">Controllo risorse</div>
<svg class="abs" style="left:1599px;top:579px" width="26" height="30" viewBox="0 0 26 30">
<path d="M2.500 2.500h13l7.200 7.200v16.500h-20.200z" fill="#fff" stroke="#242424" stroke-width="2.600" stroke-linejoin="round"/>
<path d="M1.200 25.500h22.800v2.300q0 .8-.8.800h-21.200q-.8 0-.8-.8z" fill="#242424"/>
<path d="M15 2.500v7.500h7.500" fill="#fff" stroke="#242424" stroke-width="1.600"/>
<rect x="6.500" y="6" width="4" height="1.800" fill="#666"/><rect x="6.500" y="10.500" width="4" height="1.800" fill="#666"/>
<rect x="6.500" y="15.500" width="12.500" height="1.800" fill="#222"/><rect x="6.500" y="20" width="12.500" height="1.800" fill="#222"/></svg>
<div class="t wt" style="left:1639.06px;top:587px;font-size:12.5px;font-weight:bold;transform:scaleX(1.1155);">Registri recenti</div>
<svg class="abs" style="left:1599px;top:761px" width="28" height="28" viewBox="0 0 28 28">
<g fill="none" stroke-linecap="round"><rect x="-3.300" y="-6.200" width="6.600" height="13" rx="3.300" transform="translate(8.500 8.500) rotate(-45)" stroke="#3c3c3c" stroke-width="2.600"/>
<rect x="-3.300" y="-6.200" width="6.600" height="13" rx="3.300" transform="translate(18.500 18.300) rotate(-45)" stroke="#1e1e1e" stroke-width="2.800"/>
<path d="M10.500 10.500 16.500 16.300" stroke="#555" stroke-width="2.200"/></g></svg>
<div class="t wt" style="left:1639.36px;top:767px;font-size:12.5px;font-weight:bold;transform:scaleX(1.0783);">Connessioni correnti</div>
<div class="wbox" style="top:254px"></div>
<div class="wbox" style="top:434px"></div>
<div class="wbox" style="top:614px"></div>
<div class="wbox" style="top:794px"></div>
<svg class="abs" style="left:1606px;top:283px" width="80" height="80" viewBox="0 0 80 80">
<defs><radialGradient id="ok1" cx=".5" cy=".5" r=".5"><stop offset="0" stop-color="#35c22f" stop-opacity=".55"/><stop offset=".72" stop-color="#35c22f" stop-opacity=".45"/><stop offset="1" stop-color="#35c22f" stop-opacity="0"/></radialGradient>
<radialGradient id="ok2" cx=".5" cy=".75" r=".75"><stop offset="0" stop-color="#63d84f"/><stop offset=".55" stop-color="#2fb52c"/><stop offset="1" stop-color="#1d9a22"/></radialGradient>
<linearGradient id="ok3" x1="0" y1="0" x2="0" y2="1"><stop offset="0" stop-color="#fff" stop-opacity=".55"/><stop offset="1" stop-color="#fff" stop-opacity="0"/></linearGradient></defs>
<circle cx="39.500" cy="39.500" r="36" fill="url(#ok1)"/>
<circle cx="39.500" cy="39.500" r="28.800" fill="url(#ok2)"/>
<ellipse cx="39.500" cy="27" rx="20" ry="13" fill="url(#ok3)" opacity=".55"/>
<path d="M26.500 41.500 30.500 37.200 38.500 44.500 52.500 30 56.500 34.300 38.800 53z" fill="#fff"/></svg>
<div class="t" style="left:1701.02px;top:282px;font-size:17.5px;color:#2f9a2d;transform:scaleX(1.1305);">Buono</div>
<div class="t" style="left:1701.47px;top:305px;font-size:12.5px;color:#474747;transform:scaleX(1.131);">DiskStation funziona</div>
<div class="t" style="left:1702.02px;top:319px;font-size:12.5px;color:#474747;letter-spacing:0.1px;transform:scaleX(1.16);">correttamente.</div>
<div class="t" style="left:1702.31px;top:368px;font-size:12.5px;color:#111;letter-spacing:0.07px;transform:scaleX(1.16);">Tempo di attività: 03:37:51</div>
<div class="abs" style="left:1614px;top:446.600px;width:25.500px;height:91.800px;background:#0d263e"></div><div class="abs" style="left:1615.5px;top:447.80px;width:22.500px;height:7.900px;background:#16395a"></div><div class="abs" style="left:1615.5px;top:456.85px;width:22.500px;height:7.900px;background:#16395a"></div><div class="abs" style="left:1615.5px;top:465.90px;width:22.500px;height:7.900px;background:#16395a"></div><div class="abs" style="left:1615.5px;top:474.95px;width:22.500px;height:7.900px;background:#16395a"></div><div class="abs" style="left:1615.5px;top:484.00px;width:22.500px;height:7.900px;background:#16395a"></div><div class="abs" style="left:1615.5px;top:493.05px;width:22.500px;height:7.900px;background:#16395a"></div><div class="abs" style="left:1615.5px;top:502.10px;width:22.500px;height:7.900px;background:#16395a"></div><div class="abs" style="left:1615.5px;top:511.15px;width:22.500px;height:7.900px;background:#16395a"></div><div class="abs" style="left:1615.5px;top:520.20px;width:22.500px;height:7.900px;background:#16395a"></div><div class="abs" style="left:1615.5px;top:529.25px;width:22.500px;height:7.900px;background:#16395a"></div><svg class="abs" style="left:1615px;top:447px" width="24" height="91" viewBox="0 0 24 91"><path d="M0 0H23.500L0 82z" fill="#fff" opacity=".12"/></svg><div class="abs" style="left:1615.5px;top:529.200px;width:22.500px;height:8px;background:linear-gradient(180deg,#45adf6,#2f97ea)"></div>
<div class="abs" style="left:1655px;top:446.600px;width:25.500px;height:91.800px;background:#0d263e"></div><div class="abs" style="left:1656.5px;top:447.80px;width:22.500px;height:7.900px;background:#16395a"></div><div class="abs" style="left:1656.5px;top:456.85px;width:22.500px;height:7.900px;background:#16395a"></div><div class="abs" style="left:1656.5px;top:465.90px;width:22.500px;height:7.900px;background:#16395a"></div><div class="abs" style="left:1656.5px;top:474.95px;width:22.500px;height:7.900px;background:#16395a"></div><div class="abs" style="left:1656.5px;top:484.00px;width:22.500px;height:7.900px;background:#16395a"></div><div class="abs" style="left:1656.5px;top:493.05px;width:22.500px;height:7.900px;background:#16395a"></div><div class="abs" style="left:1656.5px;top:502.10px;width:22.500px;height:7.900px;background:#16395a"></div><div class="abs" style="left:1656.5px;top:511.15px;width:22.500px;height:7.900px;background:#16395a"></div><div class="abs" style="left:1656.5px;top:520.20px;width:22.500px;height:7.900px;background:#16395a"></div><div class="abs" style="left:1656.5px;top:529.25px;width:22.500px;height:7.900px;background:#16395a"></div><svg class="abs" style="left:1656px;top:447px" width="24" height="91" viewBox="0 0 24 91"><path d="M0 0H23.500L0 82z" fill="#fff" opacity=".12"/></svg><div class="abs" style="left:1656.500px;top:529.200px;width:22.500px;height:8px;background:linear-gradient(180deg,#45adf6,#2f97ea)"></div><div class="abs" style="left:1656.500px;top:524.800px;width:22.500px;height:3.300px;background:#4fb2f6"></div>
<div class="t" style="left:1613.87px;top:547px;font-size:12px;color:#111;transform:scaleX(1.0427);">CPU</div>
<div class="t" style="left:1654.53px;top:547px;font-size:12px;color:#111;transform:scaleX(1.0154);">RAM</div>
<svg class="abs" style="left:1725px;top:449px" width="150" height="91" viewBox="0 0 150 91">
<defs><linearGradient id="ch1" x1="0" y1="0" x2=".6" y2="1"><stop offset="0" stop-color="#50708c"/><stop offset=".6" stop-color="#2a4d6c"/><stop offset="1" stop-color="#224666"/></linearGradient>
<clipPath id="chc"><rect x="0" y="0" width="150" height="90.300"/></clipPath></defs>
<rect x="0.500" y="0.500" width="149" height="89.500" fill="#0e3352" stroke="#34485c" stroke-width="1"/>
<path d="M1 1H149V1.500L1 61z" fill="url(#ch1)"/>
<rect x="1" y="1" width="148" height="1.500" fill="#000" opacity=".15"/>
<g fill="none" stroke-width="1.700" stroke-linejoin="round" clip-path="url(#chc)">
<path d="M0 89.600H150" stroke="#3f8fc4" stroke-width="1.400"/>
<path d="M24 90 28.300 81.800 32.600 90" stroke="#4aa8e0"/>
<path d="M37.700 90 42 81.800 46.300 90" stroke="#4aa8e0"/>
<path d="M89.700 90 94 81.800 98.300 90" stroke="#4aa8e0"/>
<path d="M10.300 90 14.600 81.800 18.900 90" stroke="#2ed03c"/>
<path d="M41 81.800H52L56.300 90 60.600 81.800 64.900 90" stroke="#2ed03c"/>
<path d="M72.700 90 77 81.800 81.300 90 85.600 81.800H92.500" stroke="#2ed03c"/>
<path d="M103.700 90 108 81.800 112.300 90" stroke="#2ed03c"/>
<path d="M121.700 90 126 81.800H136L140.300 90 144.600 81.800 148.900 90" stroke="#2ed03c"/>
</g></svg>
<div class="t" style="left:1711.21px;top:448px;font-size:8.5px;color:#4a4a4a;letter-spacing:1.16px;transform:scaleX(1.16);">10</div>
<div class="t" style="left:1717.21px;top:465px;font-size:8.5px;color:#4a4a4a;letter-spacing:0.83px;transform:scaleX(1.16);">8</div>
<div class="t" style="left:1717.11px;top:483px;font-size:8.5px;color:#4a4a4a;letter-spacing:0.92px;transform:scaleX(1.16);">6</div>
<div class="t" style="left:1717.40px;top:500px;font-size:8.5px;color:#4a4a4a;letter-spacing:0.49px;transform:scaleX(1.16);">4</div>
<div class="t" style="left:1717.11px;top:518px;font-size:8.5px;color:#4a4a4a;letter-spacing:0.92px;transform:scaleX(1.16);">2</div>
<div class="t" style="left:1717.21px;top:536px;font-size:8.5px;color:#4a4a4a;letter-spacing:0.75px;transform:scaleX(1.16);">0</div>
<svg class="abs" style="left:1727.500px;top:548.300px" width="11" height="10.500" viewBox="0 0 12 11"><path d="M6 .8 11 5.700H8.300V10.300H3.700V5.700H1z" fill="#4aa6f0" stroke="#1f74c8" stroke-width="1"/></svg>
<div class="t" style="left:1740.18px;top:547px;font-size:12px;color:#111;transform:scaleX(1.0793);">0 KB/s</div>
<svg class="abs" style="left:1780px;top:548.300px" width="11" height="10.500" viewBox="0 0 12 11"><path d="M6 10.200 11 5.300H8.300V.7H3.700V5.300H1z" fill="#5fdc48" stroke="#2ea122" stroke-width="1"/></svg>
<div class="t" style="left:1792.08px;top:547px;font-size:12px;color:#111;transform:scaleX(1.0822);">0 KB/s</div>
<svg width="0" height="0" style="position:absolute"><defs><radialGradient id="gi2" cx=".5" cy=".35" r=".75"><stop offset="0" stop-color="#86baf0"/><stop offset=".6" stop-color="#3a84d8"/><stop offset="1" stop-color="#2163b8"/></radialGradient></defs></svg>
<div class="lrow" style="top:623px;background:rgba(247,248,252,.85)"></div>
<svg class="abs" style="left:1654px;top:627.2px" width="14" height="14" viewBox="0 0 14 14"><circle cx="7" cy="7" r="6.600" fill="url(#gi2)"/><ellipse cx="7" cy="4" rx="4.800" ry="3" fill="#fff" opacity=".38"/><rect x="6" y="5.700" width="2.100" height="5.300" rx=".4" fill="#fff"/><circle cx="7.050" cy="3.500" r="1.250" fill="#fff"/></svg>
<div class="t" style="left:1679.66px;top:628px;font-size:11px;color:#111;letter-spacing:0.09px;transform:scaleX(1.16);">System successfully started Web St...</div>
<div class="lrow" style="top:647px;background:rgba(222,224,234,.75)"></div>
<svg class="abs" style="left:1654px;top:651.2px" width="14" height="14" viewBox="0 0 14 14"><circle cx="7" cy="7" r="6.600" fill="url(#gi2)"/><ellipse cx="7" cy="4" rx="4.800" ry="3" fill="#fff" opacity=".38"/><rect x="6" y="5.700" width="2.100" height="5.300" rx=".4" fill="#fff"/><circle cx="7.050" cy="3.500" r="1.250" fill="#fff"/></svg>
<div class="t" style="left:1680.30px;top:652px;font-size:11px;color:#111;letter-spacing:0.14px;transform:scaleX(1.16);">Access right of the shared folder [X...</div>
<div class="lrow" style="top:671px;background:rgba(247,248,252,.85)"></div>
<svg class="abs" style="left:1654px;top:675.2px" width="14" height="14" viewBox="0 0 14 14"><circle cx="7" cy="7" r="6.600" fill="url(#gi2)"/><ellipse cx="7" cy="4" rx="4.800" ry="3" fill="#fff" opacity=".38"/><rect x="6" y="5.700" width="2.100" height="5.300" rx=".4" fill="#fff"/><circle cx="7.050" cy="3.500" r="1.250" fill="#fff"/></svg>
<div class="t" style="left:1679.66px;top:676px;font-size:11px;color:#111;letter-spacing:0.17px;transform:scaleX(1.16);">Shared folder [XHTest] was set to s...</div>
<div class="lrow" style="top:695px;background:rgba(222,224,234,.75)"></div>
<svg class="abs" style="left:1654px;top:699.2px" width="14" height="14" viewBox="0 0 14 14"><circle cx="7" cy="7" r="6.600" fill="url(#gi2)"/><ellipse cx="7" cy="4" rx="4.800" ry="3" fill="#fff" opacity=".38"/><rect x="6" y="5.700" width="2.100" height="5.300" rx=".4" fill="#fff"/><circle cx="7.050" cy="3.500" r="1.250" fill="#fff"/></svg>
<div class="t" style="left:1679.66px;top:700px;font-size:11px;color:#111;letter-spacing:0.15px;transform:scaleX(1.16);">Shared folder [XHTest] was created.</div>
<div class="lrow" style="top:719px;background:rgba(247,248,252,.85)"></div>
<svg class="abs" style="left:1654px;top:723.2px" width="14" height="14" viewBox="0 0 14 14"><circle cx="7" cy="7" r="6.600" fill="url(#gi2)"/><ellipse cx="7" cy="4" rx="4.800" ry="3" fill="#fff" opacity=".38"/><rect x="6" y="5.700" width="2.100" height="5.300" rx=".4" fill="#fff"/><circle cx="7.050" cy="3.500" r="1.250" fill="#fff"/></svg>
<div class="t" style="left:1679.66px;top:724px;font-size:11px;color:#111;letter-spacing:0.06px;transform:scaleX(1.16);">System successfully restarted FTP...</div>
<svg class="abs" style="left:1614.3px;top:647.8px" width="13" height="9" viewBox="0 0 13 9"><path d="M1.300 7.300 6.500 2.300 11.700 7.300" fill="none" stroke="#b4b6ba" stroke-width="2.500"/></svg>
<div class="t" style="left:1611.97px;top:673px;font-size:11.5px;color:#111;letter-spacing:0.27px;transform:scaleX(1.16);">1/5</div>
<svg class="abs" style="left:1614.3px;top:697.8px" width="13" height="9" viewBox="0 0 13 9"><path d="M1.300 1.700 6.500 6.700 11.700 1.700" fill="none" stroke="#303030" stroke-width="2.500"/></svg>
<div class="lrow" style="top:803px;background:rgba(244,245,250,.9)"></div>
<div class="abs" style="left:1647px;top:827px;width:253px;height:96px;background:#fff"></div>
<svg class="abs" style="left:1654.600px;top:807.800px" width="13.200" height="13.200" viewBox="0 0 20 20"><path d="M10 0.500c2.600 0 4.300 2 4.300 4.800 0 2-0.900 3.900-2.100 4.900v1.600c0 .9 1.200 1.500 3.600 2.500 2.400 1 3.200 2 3.200 3.900v1.300H1v-1.300c0-1.900 .8-2.900 3.200-3.900 2.400-1 3.600-1.600 3.600-2.500v-1.600C6.600 9.200 5.700 7.300 5.700 5.300 5.700 2.500 7.400 .5 10 .5z" fill="#555"/></svg>
<div class="t" style="left:1671.08px;top:808px;font-size:11.3px;color:#111;letter-spacing:0.01px;transform:scaleX(1.16);">admin</div>
<div class="t" style="left:1749.58px;top:808px;font-size:11px;color:#111;transform:scaleX(1.0447);">HTTP</div>
<div class="t" style="left:1790.08px;top:808px;font-size:11.2px;color:#111;letter-spacing:0.18px;transform:scaleX(1.16);">03:14:40</div>
<svg class="abs" style="left:1875px;top:806px" width="22" height="16" viewBox="0 0 22 16"><g transform="rotate(38 7.500 8.500)" fill="#353535"><rect x="3.600" y="5.500" width="7.800" height="6" rx="1.200"/><rect x="4.800" y="2" width="1.400" height="4"/><rect x="8.800" y="2" width="1.400" height="4"/><path d="M5.500 11h4l-.8 2.200h-2.400z"/><rect x="6.800" y="12.500" width="1.400" height="3"/></g><circle cx="15.200" cy="10.200" r="2.600" fill="#fff" stroke="#dd4a5a" stroke-width=".9"/><path d="M13.500 8.600 16.900 11.800" stroke="#dd4a5a" stroke-width=".9"/></svg>
<svg class="abs" style="left:1614.3px;top:827.8px" width="13" height="9" viewBox="0 0 13 9"><path d="M1.300 7.300 6.500 2.300 11.700 7.300" fill="none" stroke="#b4b6ba" stroke-width="2.500"/></svg>
<div class="t" style="left:1611.97px;top:853px;font-size:11.5px;color:#111;letter-spacing:0.2px;transform:scaleX(1.16);">1/1</div>
<svg class="abs" style="left:1614.3px;top:877.8px" width="13" height="9" viewBox="0 0 13 9"><path d="M1.300 1.700 6.500 6.700 11.700 1.700" fill="none" stroke="#b4b6ba" stroke-width="2.500"/></svg>
<svg class="abs" style="left:1581px;top:936px" width="333" height="23" viewBox="0 0 333 23">
<path d="M0 4H333V23H0z" fill="#f1f4f9" opacity=".75"/>
<path d="M268 23 289 5.500H333V23z" fill="#f8f9fc" stroke="#d3d8e2" stroke-width="1"/>
<path d="M304.500 10.500 311 16.500 317.500 10.500" fill="none" stroke="#2e2e2e" stroke-width="2.600"/></svg>
<svg class="abs" style="left:1610px;top:898px" width="66" height="62" viewBox="1610 898 66 62">
<defs><linearGradient id="xw1" x1=".3" y1="0" x2=".55" y2="1"><stop offset="0" stop-color="#b4cbf0"/><stop offset=".3" stop-color="#6b90dc"/><stop offset="1" stop-color="#2c50b4"/></linearGradient>
<filter id="xwb" x="-20%" y="-20%" width="140%" height="140%"><feGaussianBlur stdDeviation=".9"/></filter></defs>
<path d="M1636 907.500 1667 915.300 1658.300 950 1619.500 938.300z" fill="#7f879a" stroke="#7f879a" stroke-width="6" stroke-linejoin="round" opacity=".6" transform="translate(-1 1.500)"/>
<path d="M1636.500 908.500 1666 916 1657.700 948.500 1621 937.500z" fill="url(#xw1)" stroke="url(#xw1)" stroke-width="4" stroke-linejoin="round"/>
<path d="M1636.500 908.500 1666 916 1657.700 948.500 1621 937.500z" fill="none" stroke="#dfe6f4" stroke-width="1.200" stroke-linejoin="round" transform="translate(0 0)" opacity=".0"/>
<path d="M1634.500 905.800 1668.300 914.400 1659.300 951 1618.300 938.700z" fill="none" stroke="#cfd8ea" stroke-width="1.500" stroke-linejoin="round" opacity=".9"/>
<g filter="url(#xwb)"><path d="M1633.500 918.500 1653 937.500M1655.500 921 1630 936" stroke="#fff" stroke-width="3.600" stroke-linecap="round"/></g>
<path d="M1634 919 1652.500 937M1655 921.500 1630.500 935.700" stroke="#fff" stroke-width="2.200" stroke-linecap="round"/></svg>
<div class="t" style="left:1674.34px;top:915px;font-size:27.5px;color:#6a8bcb;transform:scaleX(0.9633);text-shadow:0 0 2px #fff,0 0 3px rgba(255,255,255,.9),1px 1px 2px rgba(40,60,110,.6);-webkit-text-stroke:.7px #3a5aa4;">xtremehardware.it</div>
<div class="abs" style="left:0;top:959px;width:1914px;height:1px;background:#7f8ea2"></div><div class="abs" style="left:0;top:960px;width:1914px;height:1px;background:#f2f4f7"></div>
</div>
</body>
</html>
